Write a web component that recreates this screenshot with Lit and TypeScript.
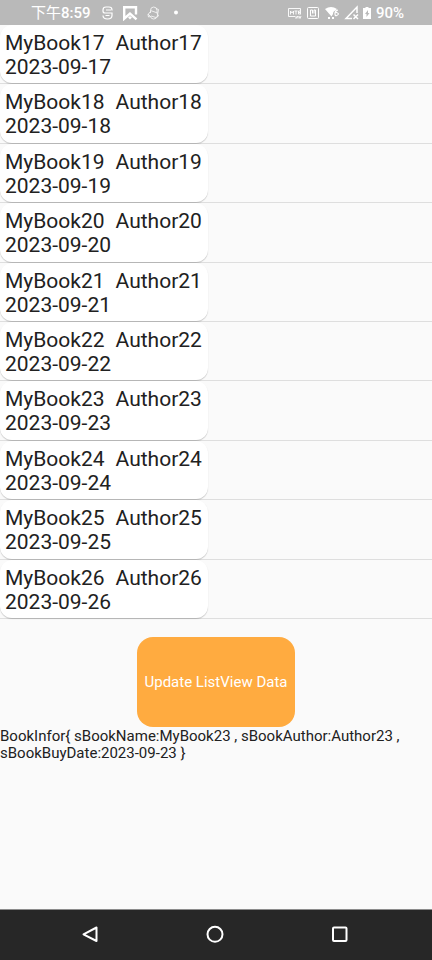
import { LitElement, html, css } from "lit";
import { customElement, property, state } from "lit/decorators.js";

interface Book {
  name: string;
  author: string;
  date: string;
}

const makeBook = (n: number): Book => ({
  name: `MyBook${n}`,
  author: `Author${n}`,
  date: `2023-09-${n}`,
});

const describe = (book: Book): string =>
  `BookInfor{ sBookName:${book.name} , sBookAuthor:${book.author} , sBookBuyDate:${book.date} }`;

@customElement("status-bar")
class StatusBar extends LitElement {
  static styles = css`
    :host {
      display: flex;
      align-items: center;
      justify-content: space-between;
      height: 25px;
      padding: 0 28px 0 31px;
      background: #b9b9b9;
      color: #fff;
      font-family: Roboto, "Noto Sans CJK SC", sans-serif;
      font-size: 15px;
      line-height: 24px;
    }
    .group {
      display: flex;
      align-items: center;
    }
    .clock {
      font-weight: 500;
      margin-right: 8px;
    }
    .meridiem {
      font-weight: 400;
    }
    svg {
      display: block;
      fill: none;
      stroke: #fff;
    }
    .solid {
      fill: #fff;
      stroke: none;
    }
    .notices {
      gap: 7px;
    }
    .signals {
      gap: 4px;
    }
    .battery {
      font-weight: 500;
    }
  `;

  render() {
    return html`
      <div class="group">
        <span class="clock"><span class="meridiem">下午</span>8:59</span>
        <div class="group notices">
          <svg width="16" height="16" viewBox="0 0 16 16" stroke-width="1.2">
            <path d="M13 5.500V5q0-3-3-3H7Q4 2 4 5v1q0 2 2 2h7v2.500q0 3.500-4.500 3.500T4 10.500M7 5h5M6.500 10.500h4" />
          </svg>
          <svg width="16" height="16" viewBox="0 0 16 16" stroke-width="2.4">
            <path d="M14 9.500V2.200H2.200v11.500L8 8.500l6.500 5.800" />
            <path class="solid" d="m8 11 2 1.500L8 14.500 6 12.500Z" />
          </svg>
          <svg width="16" height="16" viewBox="0 0 16 16" stroke-width="0.9" opacity="0.85">
            <path d="M5.500 8V5.500Q5.500 2 8.700 2T12 5.500V8l1.500 3-1.500.5Q11.500 14 8.700 14T5.500 11.500L3.500 12 3 9.500 5.500 6.500M5.500 5.500l7 2.500M11 3.500l2.500 1-1.500 8M6 11l5 1.500M3 9l3 3" />
          </svg>
          <svg width="16" height="16" viewBox="0 0 16 16">
            <circle class="solid" cx="8" cy="7.500" r="2" />
          </svg>
        </div>
      </div>
      <div class="group signals">
        <svg width="15" height="16" viewBox="0 0 15 16">
          <path d="M8 11.500H1.500v-8h12v6" stroke-width="0.9" />
          <path d="M3.500 9.500V6L5 8l1.500-2v3.500M7.500 6h3M9 6v3.500M13 6h-1.500v3H13M11.500 7.500H13M9 11v2.500l2-2.500v2.500M12 11l1 2.500 1-2.500" stroke-width="0.9" />
        </svg>
        <svg width="14" height="16" viewBox="0 0 14 16">
          <rect x="1.500" y="2.500" width="11" height="11" rx="1" />
          <path d="M6.500 5H4.500v6H9.500V5H8V8.500M6.500 5v3.500" />
        </svg>
        <svg width="16" height="16" viewBox="0 0 16 16">
          <path class="solid" d="M1 4Q7 0 13 4L11.500 5.500Q9 6 9 9L7.500 11.500Z" />
          <path d="M14 5q-3 .5-3 3.500T12.700 10.500 14.500 9 12.700 7.500 11 9" stroke-width="1.2" />
          <path class="solid" d="M4 12h2v2H4zM8 12h2v2H8z" />
        </svg>
        <svg width="15" height="16" viewBox="0 0 15 16">
          <path d="M13 8V2L2 13.500h6" stroke-width="1.500" />
          <path d="m9.500 9.500 4.500 4.500m0-4.500L9.500 14" stroke-width="1.500" />
        </svg>
        <svg width="9" height="16" viewBox="0 0 9 16">
          <path class="solid" fill-rule="evenodd" d="M2.500 2h3v1H8v11H0V3h2.500ZM5 5 2 9h1.500v3l3-4H5Z" />
        </svg>
        <span class="battery">90%</span>
      </div>
    `;
  }
}

@customElement("book-row")
class BookRow extends LitElement {
  static styles = css`
    :host {
      display: flex;
      border-bottom: 1px solid #dedede;
    }
    .card {
      padding: 6px 6px 4px 5px;
      background: #fff;
      border-radius: 12px;
      box-shadow: 0 1px 1px rgba(0, 0, 0, 0.2);
      font-size: 21px;
      line-height: 24px;
    }
    .names {
      display: flex;
      gap: 11px;
    }
  `;

  @property({ attribute: false }) book!: Book;

  render() {
    return html`
      <div class="card">
        <div class="names"><span>${this.book.name}</span><span>${this.book.author}</span></div>
        <div>${this.book.date}</div>
      </div>
    `;
  }
}

@customElement("nav-bar")
class NavBar extends LitElement {
  static styles = css`
    :host {
      display: flex;
      align-items: center;
      justify-content: space-around;
      height: 50px;
      padding: 0 28px;
      background: #272727;
      border-top: 1px solid #8c8c8c;
    }
    button {
      padding: 12px;
      border: 0;
      background: none;
    }
    svg {
      display: block;
      fill: none;
      stroke: #fff;
      stroke-width: 2;
      stroke-linejoin: round;
    }
  `;

  render() {
    return html`
      <button aria-label="Back">
        <svg width="20" height="20" viewBox="0 0 20 20"><path d="M15.500 2.500v13.500L2.500 9.300Z" /></svg>
      </button>
      <button aria-label="Home">
        <svg width="20" height="20" viewBox="0 0 20 20"><circle cx="9" cy="9.300" r="7.500" /></svg>
      </button>
      <button aria-label="Recent apps">
        <svg width="20" height="20" viewBox="0 0 20 20"><rect x="2" y="2.500" width="13.500" height="13.500" rx="1" /></svg>
      </button>
    `;
  }
}

@customElement("app-root")
class AppRoot extends LitElement {
  static styles = css`
    :host {
      display: flex;
      flex-direction: column;
      min-height: 100vh;
      background: #fafafa;
      color: #212121;
      font-family: Roboto, sans-serif;
    }
    main {
      flex: 1;
      display: flex;
      flex-direction: column;
    }
    .list {
      display: grid;
      grid-auto-rows: 1fr;
      min-height: 594px;
    }
    .update {
      align-self: center;
      min-height: 90px;
      margin-top: 18px;
      padding: 1px 8px 0;
      border: 0;
      border-radius: 16px;
      background: #ffab40;
      color: #fff;
      font-family: inherit;
      font-size: 15px;
      line-height: 17px;
    }
    .result {
      margin: 1px 0 0;
      font-size: 15px;
      line-height: 17px;
    }
  `;

  @state() private books: Book[] = Array.from({ length: 10 }, (_, i) => makeBook(17 + i));
  @state() private selected: Book = makeBook(23);

  render() {
    return html`
      <status-bar></status-bar>
      <main>
        <div class="list" role="list">
          ${this.books.map(
            (book) => html`<book-row role="listitem" .book=${book} @click=${() => (this.selected = book)}></book-row>`
          )}
        </div>
        <button class="update" @click=${() => (this.books = [...this.books])}>Update ListView Data</button>
        <p class="result">${describe(this.selected)}</p>
      </main>
      <nav-bar></nav-bar>
    `;
  }
}
